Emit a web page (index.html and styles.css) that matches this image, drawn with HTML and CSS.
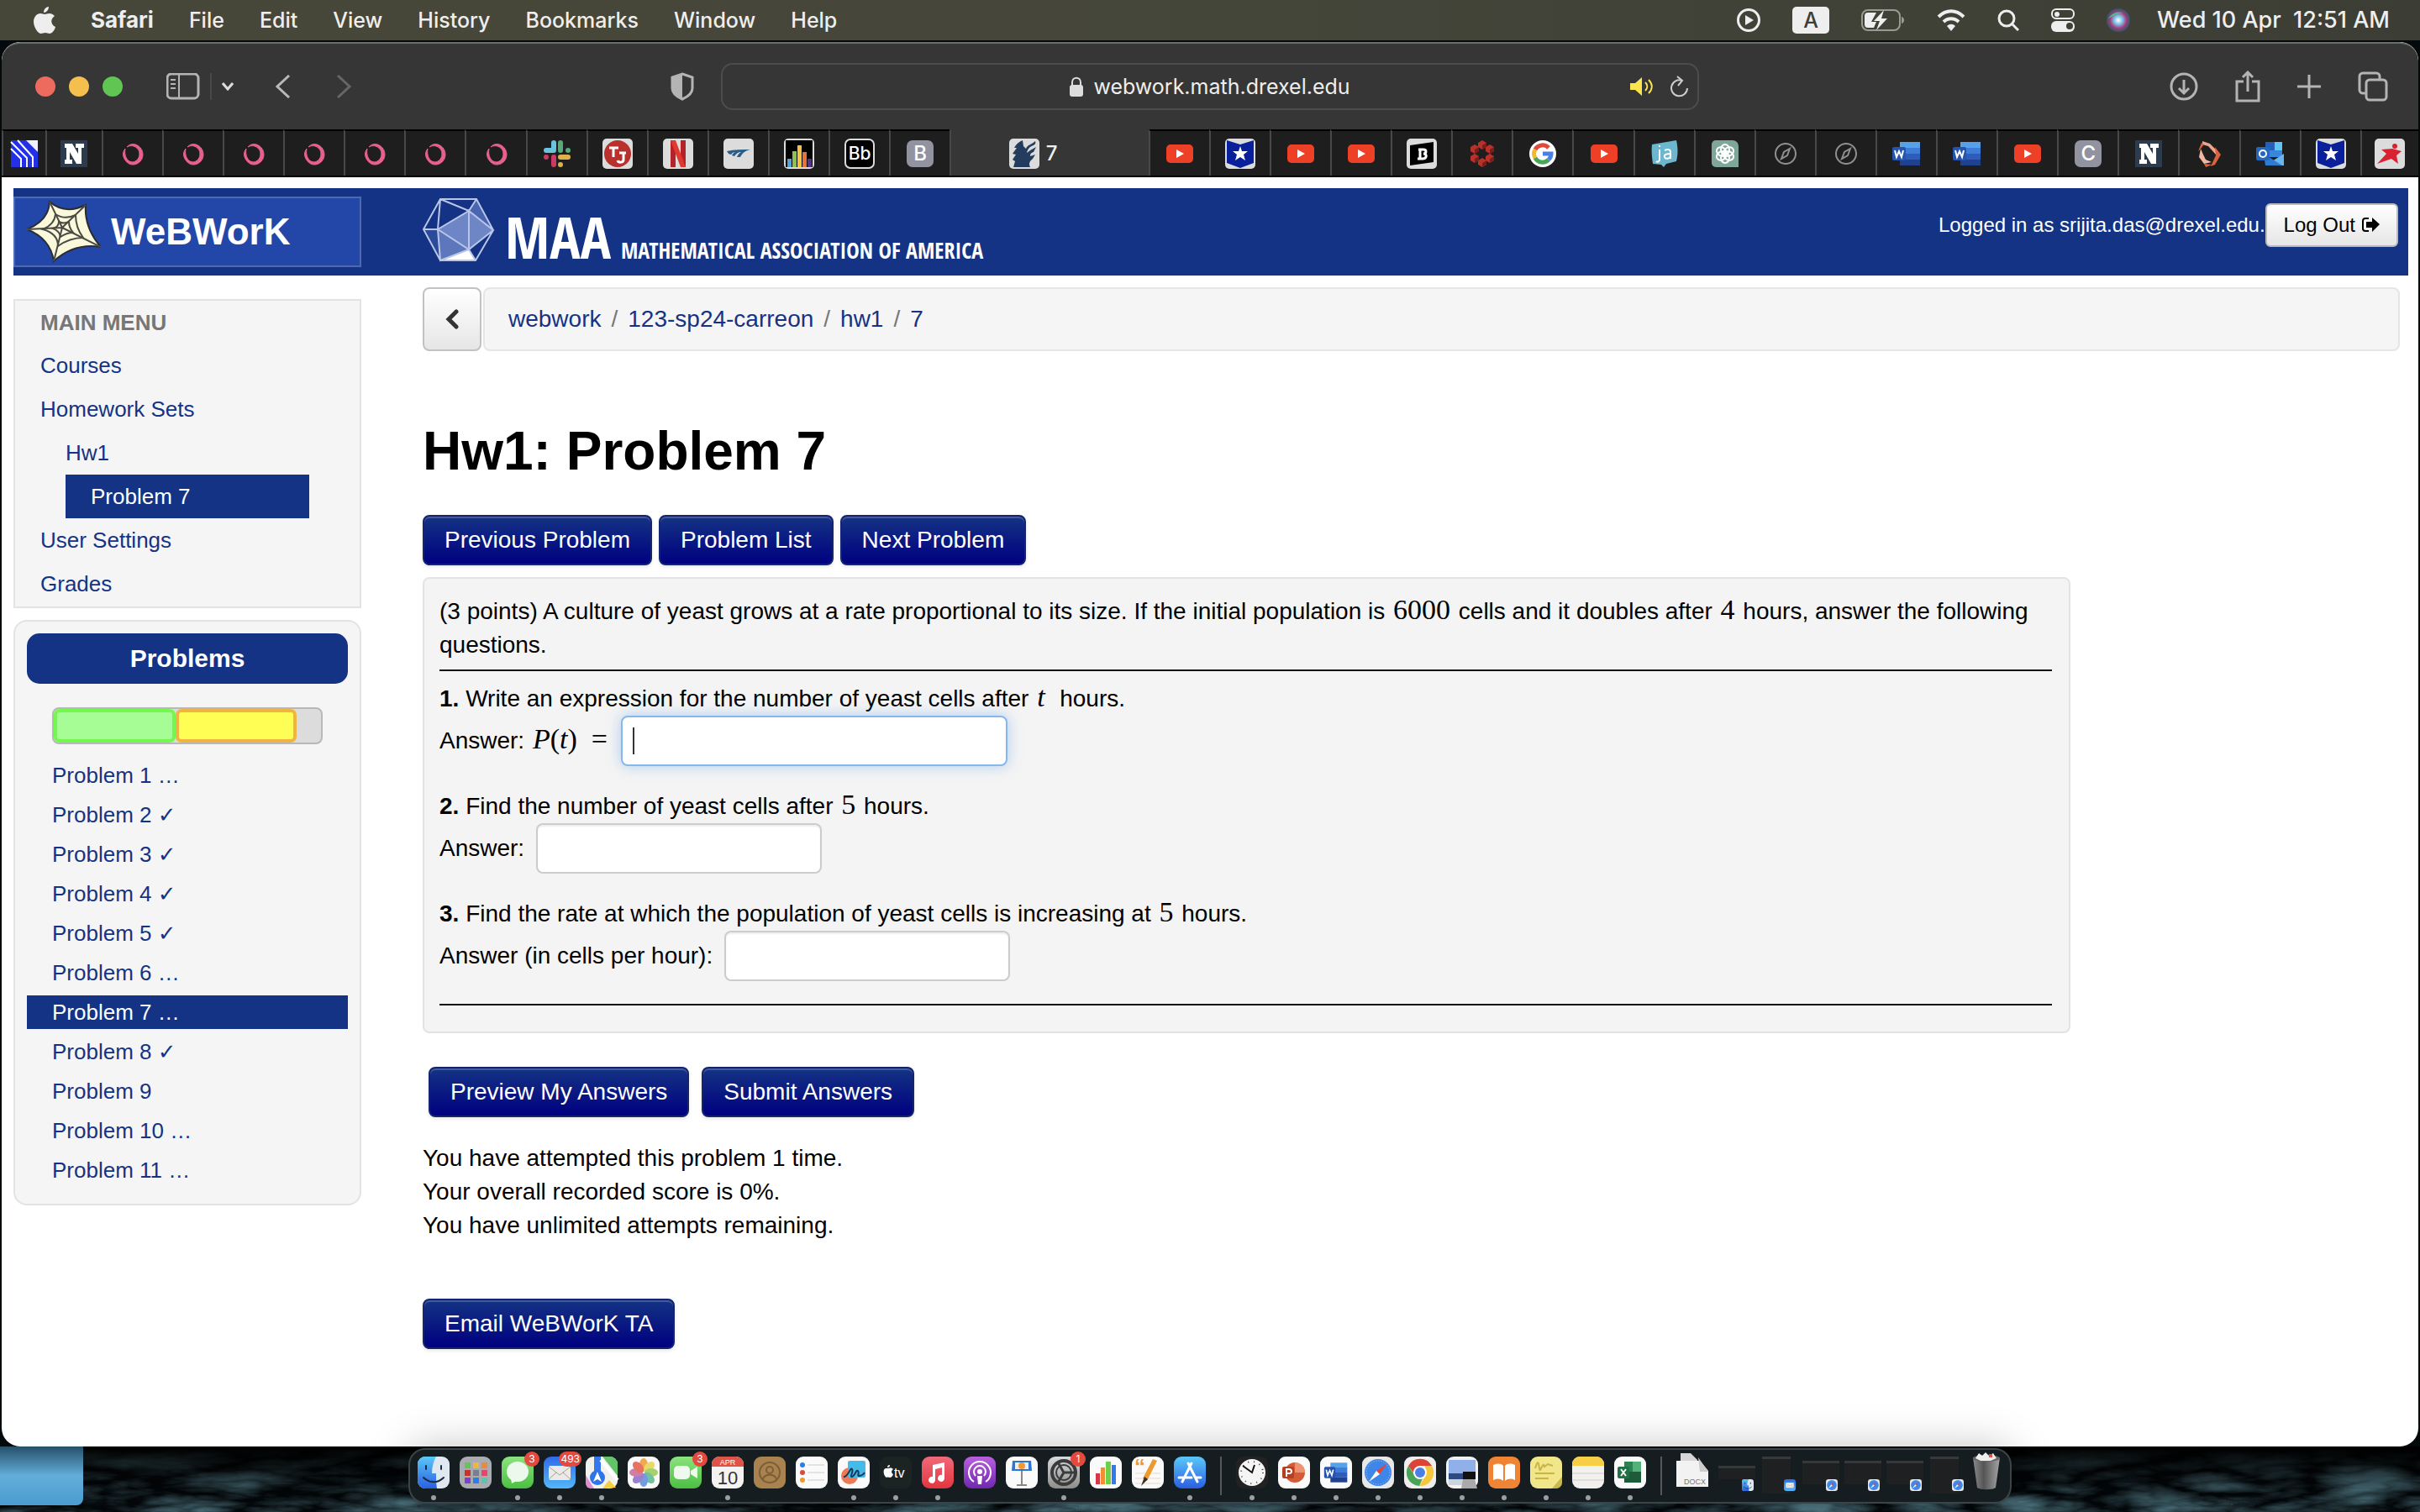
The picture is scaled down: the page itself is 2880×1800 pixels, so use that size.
FILE: index.html
```html
<!DOCTYPE html>
<html lang="en">
<head>
<meta charset="utf-8">
<title>WeBWorK : Hw1: Problem 7</title>
<link rel="stylesheet" href="styles.css">
</head>
<body>
<svg class="defs" aria-hidden="true">
  <defs>
    <linearGradient id="g-blue" x2="0" y2="1"><stop stop-color="#5ac8fa"/><stop offset="1" stop-color="#2a5fe0"/></linearGradient>
    <linearGradient id="g-green" x2="0" y2="1"><stop stop-color="#8be37e"/><stop offset="1" stop-color="#4cbf43"/></linearGradient>
    <linearGradient id="g-mail" x2="0" y2="1"><stop stop-color="#2f6be8"/><stop offset="1" stop-color="#54b7f7"/></linearGradient>
    <linearGradient id="g-music" x2="0" y2="1"><stop stop-color="#ef6a78"/><stop offset="1" stop-color="#e3353f"/></linearGradient>
    <linearGradient id="g-pod" x2="0" y2="1"><stop stop-color="#b95fe0"/><stop offset="1" stop-color="#7128b0"/></linearGradient>
    <linearGradient id="g-grey" x2="0" y2="1"><stop stop-color="#d5dbe0"/><stop offset="1" stop-color="#8d8d88"/></linearGradient>
    <linearGradient id="g-trash" x2="1" y2="0"><stop stop-color="#8a8a8a"/><stop offset=".4" stop-color="#555"/><stop offset="1" stop-color="#a5a5a5"/></linearGradient>
    <radialGradient id="g-siri"><stop stop-color="#fff"/><stop offset=".35" stop-color="#7fc4e8"/><stop offset=".7" stop-color="#a33a78"/><stop offset="1" stop-color="#2b5a6e"/></radialGradient>
    <filter id="water" x="0" y="0" width="100%" height="100%">
      <feTurbulence type="turbulence" baseFrequency="0.008 0.035" numOctaves="4" seed="8"/>
      <feColorMatrix values="0 0 0 0 .14  0 0 0 0 .34  0 0 0 0 .42  1.6 0 0 0 -.2"/>
    </filter>
  </defs>
  <symbol id="i-loop" viewBox="0 0 36 36"><path d="M11 10C18 2 30 9 30 19s-12 16-19 9c-5-5-6-11-2-16-1 5 0 12 5 15 6 3 12-2 12-9S18 6 11 10z" fill="#e8618c" stroke="#e8618c"/></symbol>
  <symbol id="i-navy" viewBox="0 0 36 36"><path fill="#2d3b4e" d="M2 2h32v32H2z"/><path fill="#fff" d="M7 6h9l7 12v-7h-3V6h10v5h-3v19h-6l-8-14v9h3v5H7v-5h2V11H7z"/></symbol>
  <symbol id="i-yt" viewBox="0 0 36 36"><rect x="2" y="7" width="32" height="22" rx="5" fill="#ee4026"/><path fill="#fff" d="M14 13l9 5-9 5z"/></symbol>
  <symbol id="i-star" viewBox="0 0 36 36"><rect width="36" height="36" rx="5" fill="#dcdcdc"/><path fill="#0a1f9a" d="M2 2l16 5 16-5v27l-16 6-16-6z"/><path fill="#fff" d="M18 9l2 6h7l-5 4 2 7-6-4-6 4 2-7-5-4h7z"/></symbol>
  <symbol id="i-word" viewBox="0 0 36 36"><path fill="#57a1ea" d="M10 4h24v8H10z"/><path fill="#3f7cd6" d="M10 11h24v7H10z"/><path fill="#2d5cba" d="M10 18h24v7H10z"/><path fill="#1f418f" d="M10 25h24v7H10z"/><rect x="1" y="10" width="16" height="16" rx="2" fill="#2654ad"/><path d="M4 14l2 8 3-7 3 7 2-8" fill="none" stroke="#fff" stroke-width="2"/></symbol>
  <symbol id="i-compass" viewBox="0 0 36 36"><circle cx="18" cy="18" r="12" fill="none" stroke="#8f8f8f" stroke-width="2"/><path d="M23 12l-3 8-7 4 3-8z" fill="none" stroke="#8f8f8f" stroke-width="2"/></symbol>
  <symbol id="i-safari" viewBox="0 0 38 38"><rect width="38" height="38" rx="9" fill="#e8e8e8"/><circle cx="19" cy="19" r="16" fill="#3e86e8"/><circle cx="19" cy="19" r="14" fill="none" stroke="#a8ccf5" stroke-dasharray="1 2"/><path fill="#e3443c" d="M30 8L17 17l4 4z"/><path fill="#fff" d="M8 30l9-13 4 4z"/></symbol>
  <symbol id="i-finder" viewBox="0 0 38 38"><rect width="38" height="38" rx="9" fill="#dfe7f0"/><path fill="url(#g-blue)" d="M9 0h13c-3 6-5 12-5 20h5c0 7 0 12 1 18H9a9 9 0 0 1-9-9V9a9 9 0 0 1 9-9z"/><path d="M10 11v4M28 11v4M7 25c7 7 17 7 24 0" fill="none" stroke="#1b2a3c" stroke-width="2" stroke-linecap="round"/></symbol>
  <symbol id="i-mail" viewBox="0 0 38 38"><rect width="38" height="38" rx="9" fill="url(#g-mail)"/><rect x="6" y="11" width="26" height="17" rx="2" fill="#eceae6"/><path d="M6 12l13 10 13-10M6 27l9-8M32 27l-9-8" fill="none" stroke="#a5a29c"/></symbol>
</svg>

<header class="menubar">
  <nav class="menus" aria-label="Application menu">
    <button class="menu" aria-label="Apple"><svg width="26" height="32" viewBox="0 0 26 32"><path fill="#eee" d="M18 0c0 4-3 7-6 7 0-4 3-7 6-7zM13 9c2 0 3-1 6-1 2 0 4 1 6 3-6 4-4 11 1 13-1 4-4 8-7 8-2 0-3-1-5-1s-4 1-5 1C5 32 0 24 0 18 0 12 4 8 8 8c2 0 4 1 5 1z"/></svg></button>
    <button class="menu menu-app">Safari</button>
    <button class="menu">File</button>
    <button class="menu">Edit</button>
    <button class="menu">View</button>
    <button class="menu">History</button>
    <button class="menu">Bookmarks</button>
    <button class="menu">Window</button>
    <button class="menu">Help</button>
  </nav>
  <div class="status">
    <svg width="28" height="28" viewBox="0 0 28 28"><circle cx="14" cy="14" r="12.500" fill="none" stroke="#eee" stroke-width="3"/><path fill="#eee" d="M10 8l10 6-10 6z"/></svg>
    <span class="input-source">A</span>
    <svg width="52" height="26" viewBox="0 0 52 26"><rect x="1" y="1" width="45" height="24" rx="7" fill="none" stroke="#9a9a92" stroke-width="2"/><path fill="#9a9a92" d="M48 9c4 1 4 7 0 8z"/><path fill="#eee" d="M8 4h10l-6 11h6l-3 7H8a4 4 0 0 1-4-4V8a4 4 0 0 1 4-4zM27 1L15 14h7l-4 11 13-14h-7z"/></svg>
    <svg width="34" height="26" viewBox="0 0 34 26"><path d="M2 9c9-9 21-9 30 0M8 15c5-5 13-5 18 0" fill="none" stroke="#eee" stroke-width="4"/><path fill="#eee" d="M12 20c3-3 7-3 10 0l-5 6z"/></svg>
    <svg width="26" height="26" viewBox="0 0 26 26"><circle cx="11" cy="11" r="9" fill="none" stroke="#eee" stroke-width="3"/><path d="M17 17l8 8" stroke="#eee" stroke-width="3"/></svg>
    <svg width="28" height="28" viewBox="0 0 28 28"><rect x="1" y="1" width="26" height="11" rx="5" fill="none" stroke="#eee" stroke-width="2"/><circle cx="7" cy="7" r="3" fill="#eee"/><rect y="15" width="28" height="13" rx="6" fill="#eee"/><circle cx="22" cy="21" r="4" fill="#3e3f35"/></svg>
    <svg width="28" height="28" viewBox="0 0 28 28"><circle cx="14" cy="14" r="14" fill="url(#g-siri)"/><path d="M2 12c6-8 12-8 18-7-8 1-12 4-18 7z" fill="#3fc48c"/></svg>
    <time class="clock">Wed 10 Apr&nbsp; 12:51 AM</time>
  </div>
</header>

<div class="window">
  <div class="toolbar">
    <div class="toolbar-left">
      <button class="light light-close" aria-label="Close"></button>
      <button class="light light-min" aria-label="Minimise"></button>
      <button class="light light-max" aria-label="Zoom"></button>
      <button class="tool tool-sidebar" aria-label="Sidebar"><svg width="40" height="32" viewBox="0 0 40 32"><rect x="1" y="1" width="37" height="29" rx="5" fill="none" stroke="#b4b4b4" stroke-width="3"/><path d="M15 1v29M5 8h6M5 13h6M5 18h6" stroke="#b4b4b4" stroke-width="2"/></svg></button>
      <button class="tool tool-groups" aria-label="Tab groups"><svg width="14" height="10" viewBox="0 0 14 10"><path d="M1 1l6 7 6-7" fill="none" stroke="#ddd" stroke-width="3"/></svg></button>
      <button class="tool tool-back" aria-label="Back"><svg width="18" height="28" viewBox="0 0 18 28"><path d="M16 1L2 14l14 13" fill="none" stroke="#b8b8b8" stroke-width="3"/></svg></button>
      <button class="tool tool-next" aria-label="Forward"><svg width="18" height="28" viewBox="0 0 18 28"><path d="M2 1l14 13L2 27" fill="none" stroke="#666" stroke-width="3"/></svg></button>
      <button class="tool tool-shield" aria-label="Privacy report"><svg width="28" height="34" viewBox="0 0 28 34"><path d="M14 2l12 4v13c0 6-5 10-12 13C7 29 2 25 2 19V6z" fill="none" stroke="#b4b4b4" stroke-width="3"/><path d="M14 2v30C7 29 2 25 2 19V6z" fill="#b4b4b4"/></svg></button>
    </div>
    <div class="address">
      <svg width="16" height="24" viewBox="0 0 16 24"><rect y="10" width="16" height="14" rx="3" fill="#ddd"/><path d="M3 11V7c0-7 10-7 10 0v4" fill="none" stroke="#ddd" stroke-width="2"/></svg>
      <span class="url">webwork.math.drexel.edu</span>
      <span class="address-tools">
        <svg width="28" height="22" viewBox="0 0 28 22"><path fill="#fbe64f" d="M0 7h6l8-7v22l-8-7H0z"/><path d="M18 6c3 3 3 7 0 10M22 3c5 5 5 11 0 16" fill="none" stroke="#fbe64f" stroke-width="2"/></svg>
        <svg width="22" height="26" viewBox="0 0 22 26"><path d="M14 6a9.500 9.500 0 1 0 6 9M8 1l6 5-5 6" fill="none" stroke="#ccc" stroke-width="2"/></svg>
      </span>
    </div>
    <div class="toolbar-right">
      <button class="tool" aria-label="Downloads"><svg width="34" height="34" viewBox="0 0 34 34"><g fill="none" stroke="#b4b4b4" stroke-width="3"><circle cx="17" cy="17" r="15"/><path d="M17 9v16M11 19l6 6 6-6"/></g></svg></button>
      <button class="tool" aria-label="Share"><svg width="30" height="38" viewBox="0 0 30 38"><path d="M10 13H2v23h26V13h-8M15 25V2M9 8l6-6 6 6" fill="none" stroke="#b4b4b4" stroke-width="3"/></svg></button>
      <button class="tool" aria-label="New tab"><svg width="28" height="28" viewBox="0 0 28 28"><path d="M14 0v28M0 14h28" stroke="#b4b4b4" stroke-width="3"/></svg></button>
      <button class="tool" aria-label="Tab overview"><svg width="36" height="36" viewBox="0 0 36 36"><g fill="none" stroke="#b4b4b4" stroke-width="3"><rect x="10" y="10" width="24" height="24" rx="4"/><path d="M10 26H6a4 4 0 0 1-4-4V6a4 4 0 0 1 4-4h16a4 4 0 0 1 4 4v4"/></g></svg></button>
    </div>
  </div>

  <nav class="tabs" aria-label="Tabs">
    <a class="tab tab-first" href="#" aria-label="Tab"><svg viewBox="0 0 36 36"><path fill="#2230e8" d="M2 2h32v32H2z"/><path d="M2 12L14 24v10M2 4l19 19v11M10 2l18 20v12" stroke="#fff" stroke-width="2" fill="none"/><path d="M20 2l14 14V2z" fill="#eef"/></svg></a>
    <a class="tab tab-second" href="#" aria-label="Navy"><svg><use href="#i-navy"/></svg></a>
    <a class="tab" href="#" aria-label="Tab"><svg><use href="#i-loop"/></svg></a>
    <a class="tab" href="#" aria-label="Tab"><svg><use href="#i-loop"/></svg></a>
    <a class="tab" href="#" aria-label="Tab"><svg><use href="#i-loop"/></svg></a>
    <a class="tab" href="#" aria-label="Tab"><svg><use href="#i-loop"/></svg></a>
    <a class="tab" href="#" aria-label="Tab"><svg><use href="#i-loop"/></svg></a>
    <a class="tab" href="#" aria-label="Tab"><svg><use href="#i-loop"/></svg></a>
    <a class="tab" href="#" aria-label="Tab"><svg><use href="#i-loop"/></svg></a>
    <a class="tab" href="#" aria-label="Slack"><svg viewBox="0 0 36 36"><g stroke-width="6" stroke-linecap="round"><path d="M14 12V5M5 14h9" stroke="#6cc3de"/><path d="M22 5v9M31 14h0" stroke="#58a87c"/><path d="M22 22h9M22 31h0" stroke="#dfb04b"/><path d="M14 22v9M5 22h0" stroke="#cc3a66"/></g></svg></a>
    <a class="tab" href="#" aria-label="Trader Joe's"><svg viewBox="0 0 36 36"><rect width="36" height="36" rx="5" fill="#dcdcdc"/><circle cx="18" cy="18" r="16" fill="#b9312c"/><path d="M8 11h11M13 11v11M20 17h8M25 17v8c0 4-6 4-7 1" stroke="#fff" stroke-width="3" fill="none"/></svg></a>
    <a class="tab" href="#" aria-label="Netflix"><svg viewBox="0 0 36 36"><rect width="36" height="36" rx="5" fill="#dcdcdc"/><path fill="#b5232a" d="M9 2h6v32H9zM21 2h6v32h-6z"/><path fill="#e0392f" d="M9 2h6l12 32h-6z"/></svg></a>
    <a class="tab" href="#" aria-label="Amtrak"><svg viewBox="0 0 36 36"><rect width="36" height="36" rx="5" fill="#dcdcdc"/><path fill="#2b5d86" d="M4 15c9-2 18-2 28-2-5 1-9 3-12 9h-4c1-3 3-5 5-6-4 0-6 2-8 5l-3-1c1-2 3-4 5-4-3 0-5 1-6 3l-3-1z"/></svg></a>
    <a class="tab" href="#" aria-label="Charts"><svg viewBox="0 0 36 36"><rect width="36" height="36" rx="5" fill="#dcdcdc"/><path d="M2 2h32v32H2z"/><path fill="#4fa3de" d="M4 24h5v10H4z"/><path fill="#8cc152" d="M10 15h5v19h-5z"/><path fill="#f5c242" d="M16 8h5v26h-5z"/><path fill="#e8703a" d="M22 16h5v18h-5z"/><path fill="#5b2f8f" d="M28 24h5v10h-5z"/></svg></a>
    <a class="tab" href="#"><span class="letter letter-bb">Bb</span></a>
    <a class="tab" href="#"><span class="letter">B</span></a>
    <a class="tab tab-active" href="#"><svg viewBox="0 0 36 36"><rect width="36" height="36" rx="5" fill="#dcdcdc"/><path fill="#243d5e" d="M16 2c-5 2-8 5-10 9l3 0-5 7 4 1-4 6 3 2-2 7h20c-2-4-1-7 3-10l3-5-6 2c0-3 1-4 4-5l3-6-7 4-4 3c1-5 4-8 8-9 2-1 3-3 2-5-4 4-9 4-11 9l-3-3z"/></svg><span class="tab-name">7</span></a>
    <a class="tab" href="#" aria-label="YouTube"><svg><use href="#i-yt"/></svg></a>
    <a class="tab" href="#" aria-label="Star"><svg><use href="#i-star"/></svg></a>
    <a class="tab" href="#" aria-label="YouTube"><svg><use href="#i-yt"/></svg></a>
    <a class="tab" href="#" aria-label="YouTube"><svg><use href="#i-yt"/></svg></a>
    <a class="tab" href="#" aria-label="Tab"><svg viewBox="0 0 36 36"><rect width="36" height="36" rx="5" fill="#dcdcdc"/><path d="M4 8l28-4v24L4 32z"/><path d="M14 13h6c4 0 4 5 0 5 5 0 4 6-1 6h-6M16 13v11" fill="none" stroke="#fff" stroke-width="3"/></svg></a>
    <a class="tab" href="#" aria-label="Tab"><svg viewBox="0 0 36 36"><g fill="#b8322b"><path d="M18 2l5 3v5l-5 3-5-3V5z"/><path d="M18 23l5 3v5l-5 3-5-3v-5z"/><path d="M9 7l5 3v5l-5 3-5-3v-5z"/><path d="M27 7l5 3v5l-5 3-5-3v-5z"/><path d="M9 18l5 3v5l-5 3-5-3v-5z"/><path d="M27 18l5 3v5l-5 3-5-3v-5z"/></g><path fill="#7d1d1a" d="M18 8l5-3v5l-5 3zM18 29l5-3v5l-5 3zM9 13l5-3v5l-5 3zM27 13l5-3v5l-5 3zM9 24l5-3v5l-5 3zM27 24l5-3v5l-5 3z"/></svg></a>
    <a class="tab" href="#" aria-label="Google"><svg viewBox="0 0 36 36"><circle cx="18" cy="18" r="16" fill="#fff"/><g fill="none" stroke-width="5"><path d="M9 13a10 10 0 0 1 16-2" stroke="#e04a3a"/><path d="M9 23a10 10 0 0 1 0-10" stroke="#f2b92e"/><path d="M25 25a10 10 0 0 1-16-2" stroke="#4aa457"/><path d="M18 18h10c0 3-1 5-3 7" stroke="#4a7fe8"/></g></svg></a>
    <a class="tab" href="#" aria-label="YouTube"><svg><use href="#i-yt"/></svg></a>
    <a class="tab" href="#" aria-label="Tab"><svg viewBox="0 0 36 36"><path fill="#6ab7cf" d="M3 7l29-5c2 10 2 16 0 25l-12 3-3 4-3-3-10-1C3 22 2 15 3 7z"/><path d="M12 13v12c0 3-3 3-4 2M12 8v2M18 14c4-2 7-1 7 2v8M25 18c-5 0-8 1-7 4s6 2 7-1" stroke="#fff" stroke-width="2" fill="none"/></svg></a>
    <a class="tab" href="#" aria-label="ChatGPT"><svg viewBox="0 0 36 36"><path fill="#7fa799" d="M7 2h20a7 7 0 0 1 7 7v25H7a5 5 0 0 1-5-5V7a5 5 0 0 1 5-5z"/><g fill="none" stroke="#fff" stroke-width="2"><ellipse cx="18" cy="13" rx="5" ry="6"/><ellipse cx="18" cy="13" rx="5" ry="6" transform="rotate(60 18 18)"/><ellipse cx="18" cy="13" rx="5" ry="6" transform="rotate(120 18 18)"/><ellipse cx="18" cy="13" rx="5" ry="6" transform="rotate(180 18 18)"/><ellipse cx="18" cy="13" rx="5" ry="6" transform="rotate(240 18 18)"/><ellipse cx="18" cy="13" rx="5" ry="6" transform="rotate(300 18 18)"/></g></svg></a>
    <a class="tab" href="#" aria-label="Tab"><svg><use href="#i-compass"/></svg></a>
    <a class="tab" href="#" aria-label="Tab"><svg><use href="#i-compass"/></svg></a>
    <a class="tab" href="#" aria-label="Word"><svg><use href="#i-word"/></svg></a>
    <a class="tab" href="#" aria-label="Word"><svg><use href="#i-word"/></svg></a>
    <a class="tab" href="#" aria-label="YouTube"><svg><use href="#i-yt"/></svg></a>
    <a class="tab" href="#"><span class="letter">C</span></a>
    <a class="tab" href="#" aria-label="Navy"><svg><use href="#i-navy"/></svg></a>
    <a class="tab" href="#" aria-label="Tab"><svg viewBox="0 0 36 36"><path fill="#e8a890" d="M10 3l9 3 10 10-3 3-9-10-7-2z"/><path fill="#d9623f" d="M25 10l7 9-7 12-5 2 6-13z"/><path fill="#f0b8a0" d="M8 12l-2 10 6 8 9-2-7-3-3-6z"/><path fill="#d9623f" d="M9 5L5 15l3-3 4-5zM12 30l2 4 8-3z"/></svg></a>
    <a class="tab" href="#" aria-label="Outlook"><svg viewBox="0 0 36 36"><path fill="#2460b8" d="M12 4h11v12H12z"/><path fill="#5fc5f5" d="M23 4h9v12h-9z"/><path fill="#3a86dc" d="M12 14h20v8H12z"/><path fill="#67b7f0" d="M12 32l22-14v14z"/><path fill="#2f7bd0" d="M10 18l22 14H12z"/><rect x="1" y="10" width="16" height="16" rx="2" fill="#2468bd"/><circle cx="9" cy="18" r="4" fill="none" stroke="#fff" stroke-width="2"/></svg></a>
    <a class="tab" href="#" aria-label="Star"><svg><use href="#i-star"/></svg></a>
    <a class="tab tab-last" href="#" aria-label="Tab"><svg viewBox="0 0 36 36"><rect width="36" height="36" rx="5" fill="#dcdcdc"/><circle cx="24" cy="9" r="3" fill="#d92231"/><path fill="#d92231" d="M8 13l13-1 11 3-6 5 2 10-8-6L3 30l11-12z"/></svg></a>
  </nav>

  <div class="page">
    <header class="masthead">
      <a class="brand" href="#">
        <svg width="88" height="74" viewBox="0 0 88 74"><path d="M27 1Q45 17 70 5 68 32 88 55 56 50 32 72 28 45 0 34 26 24 27 1z" fill="#fbf9dc" stroke="#2b2b33" stroke-width="2"/><g fill="none" stroke="#4b4b45" stroke-width="2"><path d="M42 32L27 1M42 32L70 5M42 32l46 23M42 32L32 72M42 32L0 34"/><path d="M34 16q11 7 24 1 0 15 9 27-16 0-30 10 0-15-18-20 14-6 15-18z"/><path d="M38 25q6 3 12 0 0 7 5 13-8 0-15 5-1-7-9-10 7-2 7-8z"/></g></svg>
        <span>WeBWorK</span>
      </a>
      <a class="maa" href="#">
        <svg width="86" height="78" viewBox="0 0 86 78"><path d="M18 37L55 15l29 23-29 23z" fill="#6f86c6"/><path d="M55 15L84 38 64 1z" fill="#4a66b0"/><path d="M18 37l37 24-34 13z" fill="#5d77bd"/><path d="M55 61l8 13H21z" fill="#fff"/><path d="M18 37L1 37l20 37z" fill="#2b4a9a"/><path d="M21 1h43l20 37-21 36H21L1 37zM21 1l34 14L64 1M55 15L18 37 21 1M18 37H1M18 37l37 24 29-23L55 15v46l8 13M18 37l3 37 34-13" fill="none" stroke="#b9c6ea" stroke-width="2"/></svg>
        <span class="maa-short">MAA</span>
        <span class="maa-long">MATHEMATICAL ASSOCIATION OF AMERICA</span>
      </a>
      <div class="account">
        <span>Logged in as srijita.das@drexel.edu.</span>
        <button class="logout">Log Out <svg width="22" height="20" viewBox="0 0 22 20"><path d="M9 2H5a3 3 0 0 0-3 3v9a3 3 0 0 0 3 3h4" fill="none" stroke="#000" stroke-width="2"/><path d="M6 6h7V1l9 8-9 9v-5H6z"/></svg></button>
      </div>
    </header>

    <div class="columns">
      <aside class="sidebar">
        <nav class="main-menu" aria-label="Main menu">
          <h2 class="menu-title">MAIN MENU</h2>
          <ul>
            <li><a href="#">Courses</a></li>
            <li><a href="#">Homework Sets</a>
              <ul>
                <li><a href="#">Hw1</a>
                  <ul><li><a class="current" href="#">Problem 7</a></li></ul>
                </li>
              </ul>
            </li>
            <li><a href="#">User Settings</a></li>
            <li><a href="#">Grades</a></li>
          </ul>
        </nav>
        <section class="problems">
          <h2 class="problems-title">Problems</h2>
          <div class="progress"><span class="done" style="width:45.500%"></span><span class="partial" style="width:45.500%"></span></div>
          <ul class="problem-list">
            <li><a href="#">Problem 1 …</a></li>
            <li><a href="#">Problem 2 <i>✓</i></a></li>
            <li><a href="#">Problem 3 <i>✓</i></a></li>
            <li><a href="#">Problem 4 <i>✓</i></a></li>
            <li><a href="#">Problem 5 <i>✓</i></a></li>
            <li><a href="#">Problem 6 …</a></li>
            <li><a class="current" href="#">Problem 7 …</a></li>
            <li><a href="#">Problem 8 <i>✓</i></a></li>
            <li><a href="#">Problem 9</a></li>
            <li><a href="#">Problem 10 …</a></li>
            <li><a href="#">Problem 11 …</a></li>
          </ul>
        </section>
      </aside>

      <main class="main">
        <div class="crumb-row">
          <button class="up" aria-label="Up one level"><svg width="16" height="24" viewBox="0 0 16 24"><path d="M13 3l-9 9 9 9" fill="none" stroke="#333" stroke-width="5" stroke-linecap="round"/></svg></button>
          <nav class="crumbs" aria-label="Breadcrumb"><a href="#">webwork</a><span>/</span><a href="#">123-sp24-carreon</a><span>/</span><a href="#">hw1</a><span>/</span><a href="#">7</a></nav>
        </div>
        <h1 class="title">Hw1: Problem 7</h1>
        <div class="nav-buttons">
          <button class="btn">Previous Problem</button>
          <button class="btn">Problem List</button>
          <button class="btn">Next Problem</button>
        </div>
        <form class="problem">
          <div class="body">
            <p class="text">(3 points) A culture of yeast grows at a rate proportional to its size. If the initial population is <span class="math">6000</span> cells and it doubles after <span class="math">4</span> hours, answer the following questions.</p>
            <hr>
            <div class="questions">
              <div>
                <p class="text"><b>1.</b> Write an expression for the number of yeast cells after <span class="math"><em>t</em></span>&nbsp; hours.</p>
                <div class="answer"><label for="ans1">Answer: <span class="math"><em>P</em>(<em>t</em>)&nbsp; =</span></label><input class="field field-active" id="ans1" type="text"></div>
              </div>
              <div>
                <p class="text"><b>2.</b> Find the number of yeast cells after <span class="math">5</span> hours.</p>
                <div class="answer"><label for="ans2">Answer:</label><input class="field" id="ans2" type="text"></div>
              </div>
              <div>
                <p class="text"><b>3.</b> Find the rate at which the population of yeast cells is increasing at <span class="math">5</span> hours.</p>
                <div class="answer"><label for="ans3">Answer (in cells per hour):</label><input class="field" id="ans3" type="text"></div>
              </div>
            </div>
            <hr>
          </div>
          <div class="submit-row">
            <button class="btn" type="button">Preview My Answers</button>
            <button class="btn" type="button">Submit Answers</button>
          </div>
        </form>
        <p class="summary">You have attempted this problem 1 time.<br>Your overall recorded score is 0%.<br>You have unlimited attempts remaining.</p>
        <button class="btn">Email WeBWorK TA</button>
      </main>
    </div>
  </div>
</div>

<footer class="desktop">
  <svg class="water" width="100%" height="100%"><rect width="100%" height="100%" filter="url(#water)"/></svg>
  <div class="shade"></div>
  <div class="behind"></div>
  <div class="dock">
    <a class="app on" href="#" aria-label="Finder"><svg><use href="#i-finder"/></svg></a>
    <a class="app" href="#" aria-label="Launchpad"><svg viewBox="0 0 38 38"><rect width="38" height="38" rx="9" fill="#a9abae"/><g><path fill="#63c653" d="M6 7h7v7H6z"/><path fill="#f0b53c" d="M16 7h7v7h-7z"/><path fill="#ee8a35" d="M26 7h7v7h-7z"/><path fill="#c8322c" d="M6 16h7v7H6z"/><path fill="#77818c" d="M16 16h7v7h-7z"/><path fill="#e9426c" d="M26 16h7v7h-7z"/><path fill="#7f3fd0" d="M6 25h7v7H6z"/><path fill="#2b7de9" d="M16 25h7v7h-7z"/><path fill="#55c6b0" d="M26 25h7v7h-7z"/></g></svg></a>
    <a class="app on" href="#" aria-label="Messages"><svg viewBox="0 0 38 38"><rect width="38" height="38" rx="9" fill="url(#g-green)"/><ellipse cx="19" cy="18" rx="13" ry="12" fill="#edf8ec"/><path fill="#edf8ec" d="M11 26l1 6 6-3z"/></svg><span class="badge">3</span></a>
    <a class="app on" href="#" aria-label="Mail"><svg><use href="#i-mail"/></svg><span class="badge">493</span></a>
    <a class="app on" href="#" aria-label="Maps"><svg viewBox="0 0 38 38"><rect width="38" height="38" rx="9" fill="#f1f1ee"/><path fill="#62c466" d="M20 0h9a9 9 0 0 1 9 9v14z"/><path fill="#3478f0" d="M10 0h8v20h-8z"/><path fill="#f5cf3f" d="M20 38l8-10 8 9z"/><path fill="#e08ccf" d="M0 22l10 16H6a6 6 0 0 1-6-6z"/><path stroke="#fff" stroke-width="4" d="M18 4l20 24"/><circle cx="14" cy="25" r="9" fill="#2f74e8"/><path fill="#fff" d="M14 18l5 12-5-3-5 3z"/></svg></a>
    <a class="app" href="#" aria-label="Photos"><svg viewBox="0 0 38 38"><rect width="38" height="38" rx="9" fill="#fafafa"/><g opacity=".85"><ellipse cx="19" cy="10" rx="5" ry="8" fill="#f09a37"/><ellipse cx="19" cy="10" rx="5" ry="8" fill="#e8d44a" transform="rotate(45 19 19)"/><ellipse cx="19" cy="10" rx="5" ry="8" fill="#9ac955" transform="rotate(90 19 19)"/><ellipse cx="19" cy="10" rx="5" ry="8" fill="#5bb98f" transform="rotate(135 19 19)"/><ellipse cx="19" cy="10" rx="5" ry="8" fill="#5b8fdc" transform="rotate(180 19 19)"/><ellipse cx="19" cy="10" rx="5" ry="8" fill="#8a6cc9" transform="rotate(225 19 19)"/><ellipse cx="19" cy="10" rx="5" ry="8" fill="#c9689c" transform="rotate(270 19 19)"/><ellipse cx="19" cy="10" rx="5" ry="8" fill="#e65b48" transform="rotate(315 19 19)"/></g></svg></a>
    <a class="app" href="#" aria-label="FaceTime"><svg viewBox="0 0 38 38"><rect width="38" height="38" rx="9" fill="url(#g-green)"/><rect x="5" y="11" width="19" height="16" rx="5" fill="#eefaee"/><path fill="#eefaee" d="M25 17l8-5v14l-8-5z"/></svg><span class="badge">3</span></a>
    <a class="app on" href="#" aria-label="Calendar"><svg viewBox="0 0 38 38"><rect width="38" height="38" rx="9" fill="#f4f3f1"/><path fill="#dd5348" d="M9 0h20a9 9 0 0 1 9 9v3H0V9a9 9 0 0 1 9-9z"/><text x="19" y="10" font-size="9" text-anchor="middle" fill="#fff">APR</text><text x="19" y="33" font-size="22" text-anchor="middle" fill="#333">10</text></svg></a>
    <a class="app" href="#" aria-label="Contacts"><svg viewBox="0 0 38 38"><rect width="38" height="38" rx="9" fill="#a8834f"/><g fill="none" stroke="#7d5d33" stroke-width="2"><circle cx="19" cy="19" r="12"/><circle cx="19" cy="16" r="4"/><path d="M11 27c2-7 14-7 16 0"/></g></svg></a>
    <a class="app" href="#" aria-label="Reminders"><svg viewBox="0 0 38 38"><rect width="38" height="38" rx="9" fill="#fafafa"/><circle cx="8" cy="10" r="3" fill="#2b7de9"/><circle cx="8" cy="19" r="3" fill="#dd4a3f"/><circle cx="8" cy="28" r="3" fill="#ee9a2e"/><path d="M14 10h20M14 19h20M14 28h20" stroke="#ccc"/></svg></a>
    <a class="app on" href="#" aria-label="Freeform"><svg viewBox="0 0 38 38"><rect width="38" height="38" rx="9" fill="#fafafa"/><circle cx="14" cy="23" r="10" fill="#ee7a55"/><rect x="12" y="5" width="21" height="20" rx="2" fill="#45bce8"/><path d="M7 24c5 1 8-12 10-9s-3 9 0 9 5-9 7-7-1 6 1 6 5-1 7-4" fill="none" stroke="#16385c" stroke-width="2"/></svg></a>
    <a class="app on" href="#" aria-label="TV"><svg viewBox="0 0 38 38"><rect width="38" height="38" rx="9" fill="#1c2423"/><path fill="#fff" d="M11 14c2-1 4 0 5 1-3 2-2 5 0 6-1 3-3 4-4 4s-2-1-4 0c-4-2-5-12 0-11zM9 13c0-2 1-3 3-3 0 2-1 3-3 3z"/><text x="17" y="25" font-size="16" fill="#fff">tv</text></svg></a>
    <a class="app on" href="#" aria-label="Music"><svg viewBox="0 0 38 38"><rect width="38" height="38" rx="9" fill="url(#g-music)"/><path fill="#fff" d="M13 10l14-3v19a4 4 0 1 1-3-4V13l-8 2v13a4 4 0 1 1-3-4z"/></svg></a>
    <a class="app" href="#" aria-label="Podcasts"><svg viewBox="0 0 38 38"><rect width="38" height="38" rx="9" fill="url(#g-pod)"/><g fill="none" stroke="#fff" stroke-width="2"><path d="M12 30a13 13 0 1 1 14 0M14 23a7 7 0 1 1 10 0"/></g><circle cx="19" cy="18" r="3" fill="#fff"/><path fill="#fff" d="M16 23h6l-1 10h-4z"/></svg></a>
    <a class="app" href="#" aria-label="Keynote"><svg viewBox="0 0 38 38"><rect width="38" height="38" rx="9" fill="#fafafa"/><path fill="#2f74d0" d="M8 5h22l1 12H7z"/><path fill="#e8eef8" d="M11 7h16v8H11z"/><circle cx="19" cy="11" r="4" fill="#ee9a2e"/><path stroke="#888" stroke-width="2" d="M19 17v16M13 34h12"/></svg></a>
    <a class="app on" href="#" aria-label="System Settings"><svg viewBox="0 0 38 38"><rect width="38" height="38" rx="9" fill="url(#g-grey)"/><g fill="none" stroke="#3b3b3b"><circle cx="19" cy="19" r="14" stroke-width="4"/><circle cx="19" cy="19" r="9" stroke-width="2"/><path stroke-width="3" d="M19 19h13M19 19L12 7M19 19l-7 12"/></g></svg><span class="badge">1</span></a>
    <a class="app" href="#" aria-label="Numbers"><svg viewBox="0 0 38 38"><rect width="38" height="38" rx="9" fill="#fafafa"/><path fill="#d2374a" d="M7 20h5v13H7z"/><path fill="#ee8f35" d="M13 13h5v20h-5z"/><path fill="#6cd04a" d="M19 6h6v27h-6z"/><path fill="#2f7be8" d="M26 10h5v23h-5z"/></svg></a>
    <a class="app" href="#" aria-label="Pages"><svg viewBox="0 0 38 38"><rect width="38" height="38" rx="9" fill="#fafafa"/><path stroke="#e5d9c5" d="M4 20h30M4 26h30M4 32h30"/><path fill="#ee9a2e" d="M25 3l5 2-12 24-5-3z"/><path fill="#333" d="M15 24l4 3-8 8z"/><text x="3" y="21" font-size="26" font-weight="700" fill="#ee9a2e">“</text></svg></a>
    <a class="app on" href="#" aria-label="App Store"><svg viewBox="0 0 38 38"><rect width="38" height="38" rx="9" fill="url(#g-blue)"/><path d="M21 8L10 30M17 8l11 22M6 25h15M26 25h6" stroke="#fff" stroke-width="3" stroke-linecap="round"/></svg></a>
    <span class="rule"></span>
    <a class="app on" href="#" aria-label="Clock"><svg viewBox="0 0 38 38"><rect width="38" height="38" rx="9" fill="#222"/><circle cx="19" cy="19" r="16" fill="#f5f5f5"/><circle cx="19" cy="19" r="13" fill="none" stroke="#444" stroke-width="2" stroke-dasharray="1 6"/><path d="M8 11l11 8 3-9" fill="none" stroke="#111" stroke-width="2"/></svg></a>
    <a class="app on" href="#" aria-label="PowerPoint"><svg viewBox="0 0 38 38"><rect width="38" height="38" rx="9" fill="#fafafa"/><circle cx="20" cy="19" r="12" fill="#d25b38"/><path fill="#ee9272" d="M20 7a12 12 0 0 1 12 12H20z"/><rect x="5" y="12" width="14" height="14" rx="2" fill="#b53f22"/><path d="M10 24v-9h3c4 0 4 5 0 5h-3" fill="none" stroke="#fff" stroke-width="2"/></svg></a>
    <a class="app on" href="#" aria-label="Word"><svg viewBox="0 0 38 38"><rect width="38" height="38" rx="9" fill="#fafafa"/><use href="#i-word" x="4" y="4" width="30" height="30"/></svg></a>
    <a class="app on" href="#" aria-label="Safari"><svg><use href="#i-safari"/></svg></a>
    <a class="app on" href="#" aria-label="Chrome"><svg viewBox="0 0 38 38"><rect width="38" height="38" rx="9" fill="#eee"/><path fill="#dd4337" d="M5 11a16 16 0 0 1 28 0H19l-6 11z"/><path fill="#f5c73a" d="M33 11a16 16 0 0 1-15 24l8-13-1-11z"/><path fill="#4aa457" d="M5 11l8 12 9 3-4 9A16 16 0 0 1 5 11z"/><circle cx="19" cy="19" r="8" fill="#fff"/><circle cx="19" cy="19" r="6" fill="#4a7fe8"/></svg></a>
    <a class="app on" href="#" aria-label="Preview"><svg viewBox="0 0 38 38"><rect width="38" height="38" rx="9" fill="#f2f2f2"/><path fill="#8fb0e8" d="M3 4h32v17H3z"/><path fill="#2f4a80" d="M3 20h32v7H3z"/><path fill="#ccd5de" d="M3 27h32v7H3z"/><path fill="#111" d="M20 18h15v9H20z"/><path fill="#aaa" d="M20 27h14l3 11H18z"/></svg></a>
    <a class="app on" href="#" aria-label="Books"><svg viewBox="0 0 38 38"><rect width="38" height="38" rx="9" fill="#ee8434"/><path fill="#fff" d="M6 10c5-2 9-2 12 1v18c-4-3-8-3-12-1zM32 10c-5-2-9-2-12 1v18c4-3 8-3 12-1z"/></svg></a>
    <a class="app on" href="#" aria-label="Stickies"><svg viewBox="0 0 38 38"><rect width="38" height="38" rx="9" fill="#f2e68a"/><path d="M6 14c3-10 4-8 5 0s4-10 6-2l4-3 6 2M6 20h23M6 26h16" fill="none" stroke="#c9b545" stroke-width="2"/><path fill="#c9b84f" d="M38 24L26 38h5a7 7 0 0 0 7-7z"/></svg></a>
    <a class="app on" href="#" aria-label="Notes"><svg viewBox="0 0 38 38"><rect width="38" height="38" rx="9" fill="#f2f1ee"/><path fill="#f7cf46" d="M9 0h20a9 9 0 0 1 9 9v2H0V9a9 9 0 0 1 9-9z"/><path stroke="#ccc" d="M0 20h38M0 28h38"/></svg></a>
    <a class="app on" href="#" aria-label="Excel"><svg viewBox="0 0 38 38"><rect width="38" height="38" rx="9" fill="#fafafa"/><path fill="#52b27a" d="M12 6h20v12H12z"/><path fill="#2b8352" d="M12 6h10v12H12z"/><path fill="#1d5c38" d="M12 18h20v13H12z"/><rect x="4" y="12" width="14" height="14" rx="2" fill="#1f7245"/><path d="M8 15l6 8M14 15l-6 8" stroke="#fff" stroke-width="2"/></svg></a>
    <span class="rule"></span>
    <a class="app" href="#" aria-label="Document"><svg viewBox="0 0 38 38"><path fill="#d5d5d5" d="M5-4h12l8 8v20H5z"/><path fill="#f2f2f2" d="M0 5h28l10 12v19H0z"/><path fill="#ccc" d="M26 1l12 17H28z"/><text x="9" y="33" font-size="9" fill="#777">DOCX</text></svg></a>
    <a class="app thumb" href="#" aria-label="Window"><i class="shot shot-low"></i><svg><use href="#i-finder"/></svg></a>
    <a class="app thumb" href="#" aria-label="Window"><i class="shot shot-tall"></i><svg><use href="#i-mail"/></svg></a>
    <a class="app thumb" href="#" aria-label="Window"><i class="shot"></i><svg><use href="#i-safari"/></svg></a>
    <a class="app thumb" href="#" aria-label="Window"><i class="shot"></i><svg><use href="#i-safari"/></svg></a>
    <a class="app thumb" href="#" aria-label="Window"><i class="shot"></i><svg><use href="#i-safari"/></svg></a>
    <a class="app thumb" href="#" aria-label="Window"><i class="shot shot-tall"></i><svg><use href="#i-safari"/></svg></a>
    <a class="app" href="#" aria-label="Trash"><svg viewBox="0 0 38 38"><path fill="url(#g-trash)" d="M3 1h32l-5 36c-4 3-18 3-22 0z"/><ellipse cx="19" cy="2" rx="16" ry="4" fill="#666"/><path fill="#eee" d="M6 2l4-6 4 3 4-4 4 4 5-3 4 6-7 3H12z"/><path fill="#d9534a" d="M22-3h4v4h-4z"/></svg></a>
  </div>
</footer>
</body>
</html>
```

FILE: styles.css
```css
* { box-sizing: border-box; }
body {
  margin: 0;
  min-height: 100vh;
  display: flex;
  flex-direction: column;
  background: #04090c;
  font-family: "Liberation Sans", Arial, sans-serif;
  font-size: 28px;
  line-height: 40px;
  color: #000;
}
button { font: inherit; cursor: pointer; }
a { color: #143384; text-decoration: none; }
ul { list-style: none; margin: 0; padding: 0; }
h1, h2, p { margin: 0; }
svg { display: block; flex: none; }
.defs { position: absolute; width: 0; height: 0; }

/* menu bar */
.menubar {
  height: 48px;
  margin-bottom: 2px;
  padding: 0 36px 0 40px;
  display: flex;
  justify-content: space-between;
  align-items: center;
  background: linear-gradient(90deg, #474739, #45463a 50%, #3c3d34);
  font: 500 25px/32px Inter, sans-serif;
  color: #eee;
}
.menus { display: flex; align-items: center; gap: 42px; }
.menu { padding: 0; border: 0; background: none; color: inherit; }
.menu-app { font-size: 26px; font-weight: 700; }
.status { display: flex; align-items: center; gap: 38px; }
.input-source {
  width: 44px;
  border-radius: 5px;
  background: #eee;
  color: #3e3f35;
  text-align: center;
}
.clock { margin-left: -6px; font-size: 27px; }

/* browser window */
.window {
  flex: 1;
  margin: 0 2px;
  display: flex;
  flex-direction: column;
  border-radius: 22px;
  overflow: hidden;
  background: #fff;
}
.toolbar {
  height: 104px;
  display: grid;
  grid-template-columns: 1fr minmax(0, 1164px) 1fr;
  align-items: center;
  background: #363636;
  border-top: 2px solid #6c6c6c;
  border-radius: 22px 22px 0 0;
}
.tool { padding: 0; border: 0; background: none; }
.toolbar-left { display: flex; align-items: center; padding-left: 40px; }
.light { width: 24px; height: 24px; padding: 0; margin-right: 16px; border: 0; border-radius: 50%; }
.light-close { background: #ed6a5e; }
.light-min { background: #f4bf4f; }
.light-max { background: #61c554; }
.tool-sidebar { margin-left: 36px; padding-right: 12px; border-right: 2px solid #484848; }
.tool-groups { margin-left: 12px; }
.tool-back { margin-left: 50px; }
.tool-next { margin-left: 54px; }
.tool-shield { margin: 0 32px 0 auto; }
.address {
  position: relative;
  height: 56px;
  display: flex;
  align-items: center;
  justify-content: center;
  gap: 12px;
  border: 2px solid #4c4c4c;
  border-radius: 14px;
  font: 400 25px/32px Inter, sans-serif;
  color: #eee;
}
.address-tools { position: absolute; right: 10px; display: flex; align-items: center; gap: 20px; }
.toolbar-right { display: flex; align-items: center; justify-content: flex-end; gap: 44px; padding-right: 36px; }

.tabs { height: 57px; display: flex; background: #1e1e1e; border-bottom: 2px solid #000; }
.tab {
  flex: 72 1 0;
  min-width: 0;
  display: flex;
  align-items: center;
  justify-content: center;
  gap: 8px;
  border-left: 2px solid #484848;
  border-top: 2px solid #000;
  color: #eee;
  font: 500 24px/32px Inter, sans-serif;
}
.tab svg { width: 36px; height: 36px; }
.tab-first { flex-grow: 51; }
.tab-second { flex-grow: 67; }
.tab-active { flex-grow: 241; background: #363636; border-top-color: #363636; }
.tab-name { margin-right: 40px; }
.tab-last { flex-grow: 69; }
.letter {
  width: 32px;
  border-radius: 7px;
  background: #9293a0;
  text-align: center;
  color: #fff;
}
.letter-bb { width: 36px; border: 2px solid #dcdcdc; background: #000; font-size: 21px; }

/* WeBWorK page */
.page { flex: 1; padding: 13px 12px 40px 14px; }
.masthead { display: flex; align-items: center; height: 104px; background: #143384; }
.brand {
  width: 414px;
  height: 84px;
  padding-left: 14px;
  display: flex;
  align-items: center;
  gap: 12px;
  border: 2px solid #4e69b0;
  background: #2347a8;
  color: #fff;
  font-size: 44px;
  font-weight: 700;
}
.maa { margin-left: 73px; height: 80px; display: flex; align-items: baseline; gap: 12px; color: #fff; font-family: "Liberation Sans Narrow", "Open Sans Condensed", "Roboto Condensed", "Liberation Sans", sans-serif; font-weight: 700; }
.maa svg { align-self: flex-start; }
.maa-short { font-size: 68px; line-height: 92px; }
.maa-long { font-size: 26px; }
.account {
  margin: 0 12px 16px auto;
  display: flex;
  align-items: center;
  color: #fff;
  font-size: 24px;
}
.logout {
  height: 52px;
  padding: 0 20px;
  display: flex;
  align-items: center;
  gap: 7px;
  border: 2px solid #bbb;
  border-radius: 6px;
  background: linear-gradient(#fff, #e6e6e6);
  color: #000;
}
.columns { display: grid; grid-template-columns: 414px minmax(0, 1fr); gap: 73px; padding: 14px 10px 0 0; }
.sidebar { padding-top: 14px; font-size: 26px; }
.main-menu { padding: 2px 30px 1px; border: 2px solid #e3e3e3; background: #f5f5f5; line-height: 52px; }
.menu-title { font-size: 26px; line-height: 49px; color: #777; }
.main-menu a { display: block; }
.main-menu ul ul { padding-left: 30px; }
.main-menu ul ul ul { padding-left: 0; margin-right: 30px; }
.main-menu .current { padding-left: 30px; }
.sidebar .current { background: #143384; color: #fff; }
.problems { margin-top: 14px; padding: 14px 14px 20px; border: 2px solid #e3e3e3; border-radius: 16px; background: #f5f5f5; }
.problems-title { border-radius: 15px; background: #143384; color: #fff; text-align: center; font-size: 30px; line-height: 60px; }
.progress { display: flex; height: 44px; margin: 28px 30px 17px; border: 2px solid #b8b8b8; border-radius: 8px; background: #dcdcdc; }
.done, .partial { border-radius: 7px; }
.done { border: 4px solid #73f94e; background: #a6fc95; }
.partial { border: 4px solid #f1b442; background: #fffe55; }
.problem-list { display: flex; flex-direction: column; gap: 7px; }
.problem-list a { display: block; height: 40px; padding-left: 30px; }
.problem-list i { font-family: "DejaVu Sans", sans-serif; font-style: normal; font-weight: 700; line-height: 1; }

.crumb-row { display: flex; gap: 2px; height: 76px; }
.up {
  width: 70px;
  padding: 0;
  display: grid;
  place-items: center;
  border: 2px solid #c2c2c2;
  border-radius: 8px;
  background: linear-gradient(#fff, #e6e6e6);
}
.crumbs { flex: 1; display: flex; align-items: center; gap: 12px; padding-left: 28px; border: 2px solid #e5e5e5; border-radius: 8px; background: #f5f5f5; }
.crumbs span { color: #777; }
.title { margin: 79px 0 36px; font-size: 64px; line-height: 80px; }
.nav-buttons { display: flex; gap: 8px; }
.btn {
  height: 60px;
  padding: 0 24px;
  border: 2px solid #14246e;
  border-radius: 8px;
  background: linear-gradient(#143384, #000080);
  box-shadow: inset 0 2px 0 rgba(255, 255, 255, .2), 0 2px 4px rgba(0, 0, 0, .1);
  color: #fff;
}
.body {
  width: calc(100% * 10 / 12);
  margin-top: 14px;
  padding: 19px 20px 31px 18px;
  border: 2px solid #e3e3e3;
  border-radius: 8px;
  background: #f4f4f4;
}
.body hr { height: 2px; margin: 9px 0 13px; border: 0; background: #111; }
.body hr:last-child { margin: 27px 0 0; }
.math { margin: 0 2px; font-family: "Liberation Serif", serif; font-size: 34px; line-height: 34px; }
.questions { display: flex; flex-direction: column; gap: 28px; }
.answer { display: flex; align-items: center; gap: 14px; }
.field {
  width: 340px;
  height: 60px;
  padding: 0 12px;
  border: 2px solid #ccc;
  border-radius: 8px;
  background: #fff;
  box-shadow: inset 0 2px 2px rgba(0, 0, 0, .07);
  font: inherit;
}
.field-active {
  width: 460px;
  border-color: #86b7ee;
  background: #fff linear-gradient(#333, #333) 12px center / 2px 32px no-repeat;
  box-shadow: 0 0 16px rgba(100, 165, 235, .5);
}
.submit-row { display: flex; gap: 15px; padding: 40px 0 0 7px; }
.summary { margin: 29px 0 67px; }

/* desktop and dock */
.desktop { position: relative; height: 78px; padding: 2px; display: flex; justify-content: center; align-items: flex-start; }
.water, .shade { position: absolute; inset: 0; }
.shade { background: linear-gradient(#000, rgba(0, 0, 0, .45) 60%, rgba(0, 0, 0, .2)); }
.behind { position: absolute; left: 0; top: 0; width: 99px; height: 70px; border-radius: 0 0 8px 0; background: linear-gradient(#27506a, #62aeda 50%, #4b9bd0); }
.dock {
  position: relative;
  height: 66px;
  padding: 8px 9px 0;
  display: flex;
  gap: 12px;
  border: 2px solid #3c4446;
  border-radius: 20px;
  background: #161d20;
  box-shadow: 0 0 50px rgba(0, 0, 0, .25);
}
.app { position: relative; display: block; width: 38px; height: 38px; }
.app svg { width: 38px; height: 38px; overflow: visible; }
.on::after { content: ""; position: absolute; left: 16px; top: 46px; width: 6px; height: 6px; border-radius: 50%; background: #9a9fa1; }
.badge {
  position: absolute;
  right: -7px;
  top: -6px;
  min-width: 18px;
  padding: 0 2px;
  border-radius: 9px;
  background: #e5493d;
  color: #fff;
  font: 12px/18px Inter, sans-serif;
  text-align: center;
}
.rule { width: 2px; height: 46px; margin: 0 5px; background: #53595b; }
.app.thumb { display: grid; place-items: center; }
.app.thumb svg { position: absolute; right: -4px; bottom: -3px; width: 14px; height: 14px; }
.shot { width: 44px; height: 28px; border-top: 3px solid #363839; background: #1f2021; }
.shot-low { height: 16px; }
.shot-tall { width: 34px; height: 44px; }
```
